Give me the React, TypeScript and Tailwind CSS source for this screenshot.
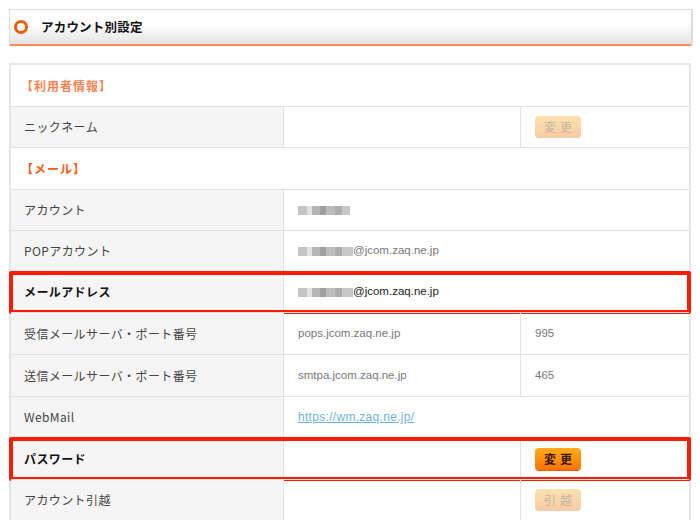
import React from "react";

const jp = { fontFamily: '"Noto Sans CJK JP", "Noto Sans", sans-serif' };
const lat = { fontFamily: '"Liberation Sans", "Noto Sans CJK JP", sans-serif' };

function Mosaic({ w = 54 }: { w?: number }) {
  return (
    <span className="inline-flex items-center h-[12px] blur-[0.6px]" style={{ width: w }}>
      <span className="h-[9px] w-[9px] bg-[#c4c4c4]" />
      <span className="h-[9px] w-[5px] bg-[#e2e2e2]" />
      <span className="h-[9px] w-[8px] bg-[#b5b5b5]" />
      <span className="h-[9px] w-[6px] bg-[#9f9f9f]" />
      <span className="h-[9px] w-[9px] bg-[#bcbcbc]" />
      <span className="h-[9px] w-[7px] bg-[#adadad]" />
      <span className="h-[9px] flex-1 bg-[#c8c8c8]" />
    </span>
  );
}

function Btn({ label, active }: { label: string; active?: boolean }) {
  return active ? (
    <span
      className="inline-flex h-[22px] w-[46px] items-center justify-center rounded-[4px] bg-gradient-to-b from-[#ffab1a] to-[#ff7200] text-[12px] font-bold tracking-[4px] text-[#3a1800] shadow-[0_1px_0_#e06000]"
      style={jp}
    >
      <span className="pl-[4px]">{label}</span>
    </span>
  ) : (
    <span
      className="inline-flex h-[22px] w-[46px] items-center justify-center rounded-[4px] bg-gradient-to-b from-[#fbe2b0] to-[#f6cba4] text-[12px] tracking-[4px] text-[#c4b5a5]"
      style={jp}
    >
      <span className="pl-[4px]">{label}</span>
    </span>
  );
}

function RedBox() {
  return (
    <div className="pointer-events-none absolute -top-[1px] -bottom-[2px] -left-[2px] -right-[2px] rounded-[2px] border-[4px] border-[#ff1a00]" />
  );
}

function Row({
  h,
  label,
  bold,
  children,
  third,
  red,
}: {
  h: string;
  label: string;
  bold?: boolean;
  children?: React.ReactNode;
  third?: React.ReactNode;
  red?: boolean;
}) {
  return (
    <div className={`relative flex border-t border-[#e3e3e3] ${h}`}>
      <div
        className={`flex w-[273px] shrink-0 items-center border-r border-[#e3e3e3] bg-[#f5f5f5] pl-[13px] text-[12px] tracking-[0.4px] ${
          bold ? "font-bold text-[#111]" : "text-[#444]"
        }`}
        style={jp}
      >
        {label}
      </div>
      {third !== undefined ? (
        <>
          <div className="flex w-[237px] shrink-0 items-center border-r border-[#e3e3e3] pl-[14px] text-[11.5px] text-[#777]" style={lat}>
            {children}
          </div>
          <div className="flex flex-1 items-center pl-[14px] text-[11.5px] text-[#777]" style={lat}>
            {third}
          </div>
        </>
      ) : (
        <div className="flex flex-1 items-center pl-[14px] text-[11.5px] text-[#777]" style={lat}>
          {children}
        </div>
      )}
      {red && <RedBox />}
    </div>
  );
}

function Section({ h, text, color, first }: { h: string; text: string; color: string; first?: boolean }) {
  return (
    <div className={`flex items-center ${first ? "" : "border-t border-[#e3e3e3]"} ${h} pl-[10px]`}>
      <span className={`text-[12px] font-bold tracking-[1px] ${color}`} style={jp}>
        {text}
      </span>
    </div>
  );
}

export default function App() {
  return (
    <div className="h-[520px] w-[700px] overflow-hidden bg-white">
      <div className="pt-[9px]">
        <div className="ml-[9px] w-[684px] border border-b-0 border-[#dcdcdc] border-r-2">
          <div className="flex h-[34px] items-center bg-gradient-to-b from-white from-40% to-[#e4e4e4] pl-[4px]">
            <span className="inline-block h-[14px] w-[14px] rounded-full border-[3px] border-[#f55a0a]" />
            <span className="ml-[13px] text-[12.5px] font-bold tracking-[0.2px] text-[#111]" style={jp}>
              アカウント別設定
            </span>
          </div>
          <div className="h-[2px] bg-[#ff8a5c]" />
        </div>
      </div>

      <div className="ml-[9px] mt-[17px] w-[682px] border-l-2 border-r-2 border-t-2 border-[#e6e6e6]">
        <Section first h="h-[41px]" text="【利用者情報】" color="text-[#ff8250]" />
        <Row h="h-[41px]" label="ニックネーム" third={<Btn label="変更" />}>
          {""}
        </Row>
        <Section h="h-[42px]" text="【メール】" color="text-[#ff5a14]" />
        <Row h="h-[41px]" label="アカウント">
          <Mosaic w={52} />
        </Row>
        <Row h="h-[41px]" label="POPアカウント">
          <Mosaic w={55} />
          <span>@jcom.zaq.ne.jp</span>
        </Row>
        <Row h="h-[41px]" label="メールアドレス" bold red>
          <Mosaic w={55} />
          <span className="text-[#222]">@jcom.zaq.ne.jp</span>
        </Row>
        <Row h="h-[42px]" label="受信メールサーバ・ポート番号" third={<span>995</span>}>
          pops.jcom.zaq.ne.jp
        </Row>
        <Row h="h-[42px]" label="送信メールサーバ・ポート番号" third={<span>465</span>}>
          smtpa.jcom.zaq.ne.jp
        </Row>
        <Row h="h-[41px]" label="WebMail">
          <span className="text-[12px] tracking-[0.3px] text-[#6fb2dc] underline">https://wm.zaq.ne.jp/</span>
        </Row>
        <Row h="h-[42px]" label="パスワード" bold red third={<Btn label="変更" active />}>
          {""}
        </Row>
        <Row h="h-[41px]" label="アカウント引越" third={<Btn label="引越" />}>
          {""}
        </Row>
      </div>
    </div>
  );
}
